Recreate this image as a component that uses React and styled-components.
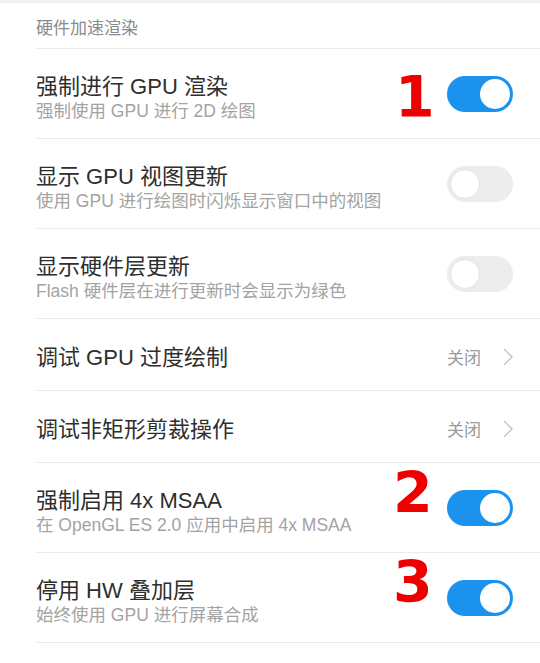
import React from "react";
import styled, { createGlobalStyle } from "styled-components";

const Global = createGlobalStyle`
  html, body { margin: 0; padding: 0; background: #ffffff; }
  body { font-family: "Liberation Sans", "Noto Sans CJK SC", sans-serif; }
`;

const Page = styled.div`
  width: 540px;
  height: 663px;
  overflow: hidden;
  background: #fff;
  border-top: 3px solid #f1f1f1;
  box-sizing: border-box;
`;

const SectionHeader = styled.div`
  margin-left: 36px;
  height: 46px;
  box-sizing: border-box;
  border-bottom: 1px solid #ececec;
  display: flex;
  align-items: center;
  font-size: 17px;
  color: #8a8a8a;
  padding-top: 2px;
`;

const Row = styled.div`
  position: relative;
  margin-left: 36px;
  padding-right: 27px;
  height: ${(p) => (p.$tall ? 90 : 72)}px;
  box-sizing: border-box;
  border-bottom: 1px solid #ececec;
  display: flex;
  align-items: center;
  justify-content: space-between;
`;

const TextBlock = styled.div`
  display: flex;
  flex-direction: column;
  padding-top: ${(p) => (p.$tall ? 8 : 6)}px;
`;

const Title = styled.div`
  font-size: 22px;
  line-height: 26px;
  color: #2e2e2e;
  white-space: nowrap;
`;

const Subtitle = styled.div`
  font-size: 17.5px;
  line-height: 22px;
  color: #a3a3a3;
  white-space: nowrap;
`;

const Switch = styled.div`
  width: 66px;
  height: 36px;
  border-radius: 18px;
  box-sizing: border-box;
  background: ${(p) => (p.$on ? "#1a92ee" : "#ececec")};
  display: flex;
  align-items: center;
  justify-content: ${(p) => (p.$on ? "flex-end" : "flex-start")};
  padding: 0 3px;
  flex-shrink: 0;
`;

const Knob = styled.div`
  width: 30px;
  height: 30px;
  border-radius: 50%;
  background: #fff;
  box-sizing: border-box;
  border: ${(p) => (p.$on ? "none" : "1px solid #e2e2e2")};
`;

const Value = styled.div`
  display: flex;
  align-items: center;
  gap: 22px;
  font-size: 17px;
  color: #9a9a9a;
  padding-top: 4px;
`;

const Mark = styled.div`
  position: absolute;
  left: ${(p) => p.$left}px;
  top: ${(p) => p.$top}px;
  font-family: "DejaVu Sans", sans-serif;
  font-weight: bold;
  font-size: 57px;
  line-height: 1;
  color: #ee0000;
`;

const Chevron = () => (
  <svg width="10" height="18" viewBox="0 0 10 18" fill="none">
    <path d="M1 1 L9 9 L1 17" stroke="#c4c4c4" strokeWidth="1.4" />
  </svg>
);

const Toggle = ({ on }) => (
  <Switch $on={on}>
    <Knob $on={on} />
  </Switch>
);

const rows = [
  { title: "强制进行 GPU 渲染", sub: "强制使用 GPU 进行 2D 绘图", on: true, mark: { n: "1", left: 359, top: 20 } },
  { title: "显示 GPU 视图更新", sub: "使用 GPU 进行绘图时闪烁显示窗口中的视图", on: false },
  { title: "显示硬件层更新", sub: "Flash 硬件层在进行更新时会显示为绿色", on: false },
  { title: "调试 GPU 过度绘制", value: "关闭" },
  { title: "调试非矩形剪裁操作", value: "关闭" },
  { title: "强制启用 4x MSAA", sub: "在 OpenGL ES 2.0 应用中启用 4x MSAA", on: true, mark: { n: "2", left: 357, top: 2 } },
  { title: "停用 HW 叠加层", sub: "始终使用 GPU 进行屏幕合成", on: true, mark: { n: "3", left: 357, top: 1 } },
];

export default function App() {
  return (
    <>
      <Global />
      <Page>
        <SectionHeader>硬件加速渲染</SectionHeader>
        {rows.map((r, i) => {
          const tall = !!r.sub;
          return (
            <Row key={i} $tall={tall}>
              <TextBlock $tall={tall}>
                <Title>{r.title}</Title>
                {r.sub && <Subtitle>{r.sub}</Subtitle>}
              </TextBlock>
              {r.value ? (
                <Value>
                  {r.value}
                  <Chevron />
                </Value>
              ) : (
                <Toggle on={r.on} />
              )}
              {r.mark && (
                <Mark $left={r.mark.left} $top={r.mark.top}>
                  {r.mark.n}
                </Mark>
              )}
            </Row>
          );
        })}
      </Page>
    </>
  );
}
